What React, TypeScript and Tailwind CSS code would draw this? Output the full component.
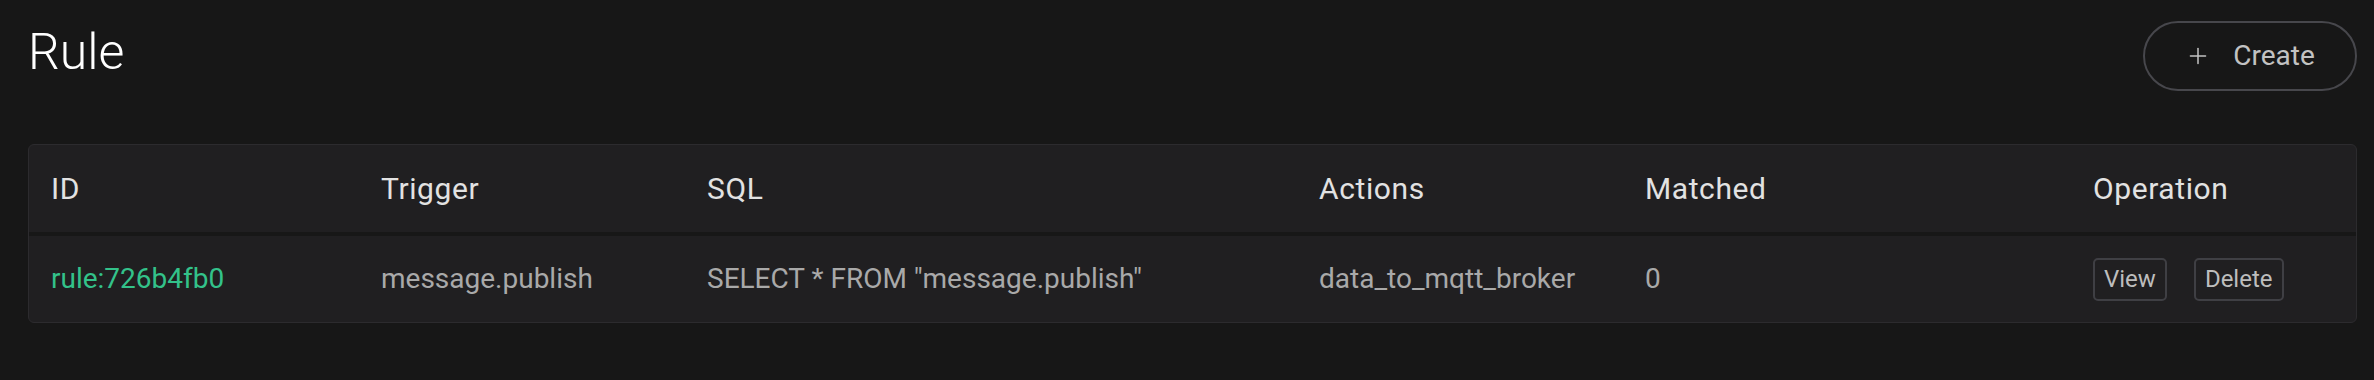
import { Plus } from "lucide-react";

const columns = ["ID", "Trigger", "SQL", "Actions", "Matched", "Operation"];

const rules = [
  {
    id: "rule:726b4fb0",
    trigger: "message.publish",
    sql: 'SELECT * FROM "message.publish"',
    actions: "data_to_mqtt_broker",
    matched: 0,
  },
];

function RowButton({ label }: { label: string }) {
  return (
    <button className="h-[43px] px-[9px] rounded-[5px] border-2 border-[#3f3f44] text-[24px] text-[#bdbdbd] leading-none">
      {label}
    </button>
  );
}

export default function App() {
  return (
    <div
      className="min-h-[380px] bg-[#171717] pl-[28px] pr-[17px] pt-[21px]"
      style={{ fontFamily: "Roboto, 'Noto Sans', sans-serif" }}
    >
      <header className="flex items-start justify-between">
        <h1 className="mt-[1px] text-[50px] font-light leading-[60px] text-white">
          Rule
        </h1>
        <button className="h-[70px] w-[214px] flex items-center justify-center gap-[22px] rounded-full border-2 border-[#47474c] text-[28px] text-[#c2c2c2]">
          <Plus className="h-[26px] w-[26px]" strokeWidth={1.4} />
          <span>Create</span>
        </button>
      </header>

      <div className="mt-[53px] rounded-[6px] border border-[#2c2b2e] bg-[#201f21] overflow-hidden">
        <div className="grid grid-cols-[330px_326px_612px_326px_448px_1fr] h-[91px] items-center border-b-4 border-[#171717]">
          {columns.map((c) => (
            <div
              key={c}
              className="pl-[22px] text-[30px] font-normal tracking-[0.02em] text-[#e2e2e2]"
            >
              {c}
            </div>
          ))}
        </div>
        {rules.map((r) => (
          <div
            key={r.id}
            className="grid grid-cols-[330px_326px_612px_326px_448px_1fr] h-[86px] items-center text-[28px] text-[#a9a9a9]"
          >
            <div className="pl-[22px] text-[#33c28a]">{r.id}</div>
            <div className="pl-[22px]">{r.trigger}</div>
            <div className="pl-[22px]">{r.sql}</div>
            <div className="pl-[22px]">{r.actions}</div>
            <div className="pl-[22px]">{r.matched}</div>
            <div className="pl-[22px] flex gap-[27px]">
              <RowButton label="View" />
              <RowButton label="Delete" />
            </div>
          </div>
        ))}
      </div>
    </div>
  );
}
